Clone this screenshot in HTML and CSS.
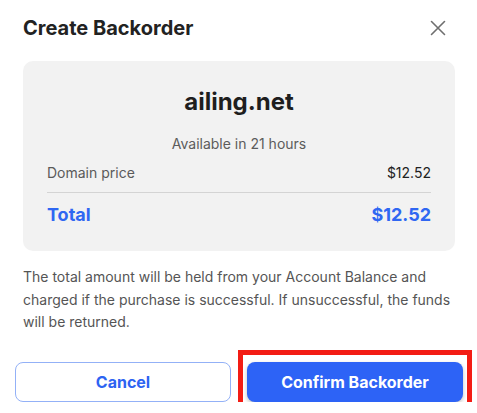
FILE: index.html
```html
<!DOCTYPE html>
<html>
<head>
<meta charset="utf-8">
<link rel="stylesheet" href="styles.css">
</head>
<body>
<div class="dialog">
  <div class="header">
    <h1 class="title">Create Backorder</h1>
    <button class="close" aria-label="Close">
      <svg width="16" height="16" viewBox="0 0 16 16"><path d="M1.5 1.5L14.5 14.5M14.5 1.5L1.5 14.5" stroke="#6f6f6f" stroke-width="1.6" stroke-linecap="round"/></svg>
    </button>
  </div>
  <div class="card">
    <div class="domain">ailing.net</div>
    <div class="avail">Available in 21 hours</div>
    <div class="row price"><span>Domain price</span><span class="amt">$12.52</span></div>
    <div class="row total"><span>Total</span><span>$12.52</span></div>
  </div>
  <p class="note">The total amount will be held from your Account Balance and charged if the purchase is successful. If unsuccessful, the funds will be returned.</p>
  <div class="actions">
    <button class="btn cancel">Cancel</button>
    <div class="confirm-wrap">
      <button class="btn confirm">Confirm Backorder</button>
      <span class="highlight"></span>
    </div>
  </div>
</div>
</body>
</html>
```
FILE: styles.css
```css
html, body {
  margin: 0;
  padding: 0;
  background: #ffffff;
}
body {
  font-family: Inter, "Noto Sans", sans-serif;
  color: #222222;
}
.dialog {
  padding: 0 14px 0 15px;
}
.header {
  margin: 0 8px;
  padding-top: 14px;
  display: flex;
  justify-content: space-between;
  align-items: center;
}
.title {
  margin: 0;
  font-size: 20px;
  line-height: 28px;
  font-weight: 700;
  color: #222222;
}
.close {
  border: 0;
  background: none;
  padding: 0;
  margin-right: 9px;
  width: 16px;
  height: 16px;
  display: flex;
}
.card {
  margin: 19px 8px 0;
  background: #f2f2f2;
  border-radius: 10px;
  padding: 26px 24px 23px;
}
.domain {
  text-align: center;
  font-size: 24px;
  line-height: 30px;
  font-weight: 700;
  color: #1e1e1e;
}
.avail {
  margin-top: 17px;
  text-align: center;
  font-size: 14px;
  line-height: 20px;
  color: #5c5c5c;
}
.row {
  display: flex;
  justify-content: space-between;
}
.price {
  margin-top: 9px;
  padding-bottom: 9px;
  border-bottom: 1px solid #d4d4d4;
  font-size: 14px;
  line-height: 20px;
  color: #5a5a5a;
}
.price .amt {
  color: #222222;
}
.total {
  padding-top: 9px;
  font-size: 18px;
  line-height: 26px;
  font-weight: 700;
  color: #2f67f2;
}
.note {
  margin: 15px 8px 0;
  font-size: 14px;
  line-height: 22.5px;
  color: #555555;
}
.actions {
  margin-top: 28px;
  display: grid;
  grid-template-columns: 1fr 1fr;
  gap: 16px;
}
.btn {
  height: 40px;
  border-radius: 8px;
  font-family: Inter, "Noto Sans", sans-serif;
  font-size: 16px;
  font-weight: 700;
  cursor: pointer;
}
.cancel {
  background: #ffffff;
  border: 1px solid #93b1f7;
  color: #2d63f2;
}
.confirm-wrap {
  position: relative;
  display: flex;
}
.confirm {
  flex: 1;
  background: #2d63f6;
  border: 0;
  color: #ffffff;
  box-shadow: 0 2px 4px rgba(0, 0, 0, 0.25);
}
.highlight {
  position: absolute;
  left: -9px;
  right: -9px;
  top: -12px;
  bottom: -9px;
  border: 5px solid #f31c14;
  pointer-events: none;
}
```
